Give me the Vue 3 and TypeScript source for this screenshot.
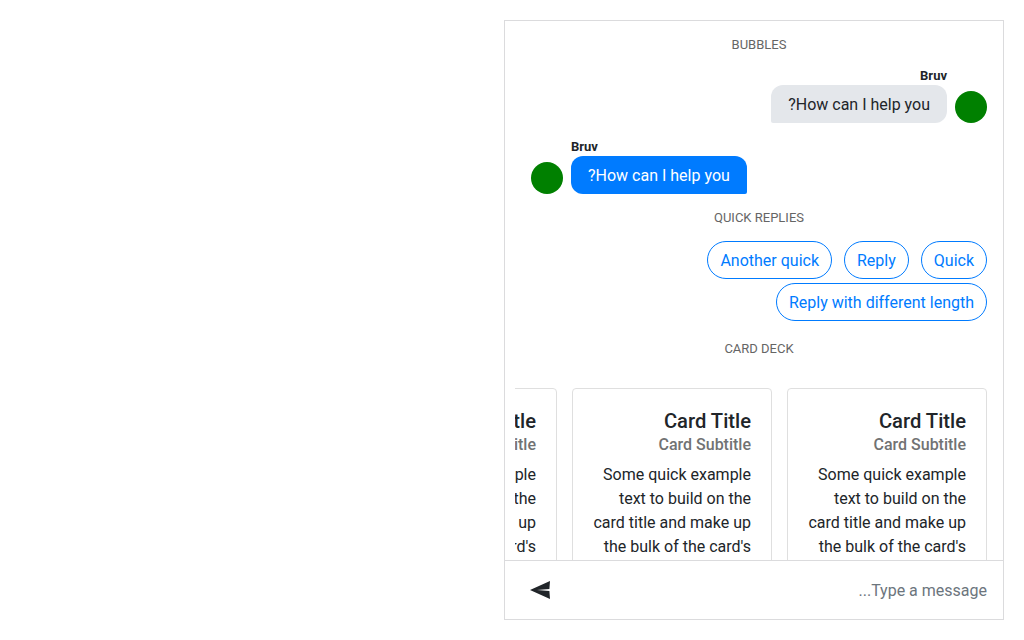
<script setup lang="ts">
interface Message {
  author: string
  text: string
  position: 'left' | 'right'
}

const messages: Message[] = [
  { author: 'Bruv', text: 'How can I help you?', position: 'left' },
  { author: 'Bruv', text: 'How can I help you?', position: 'right' },
]

const replies: string[] = ['Quick', 'Reply', 'Another quick', 'Reply with different length']

const cards = [1, 2, 3].map((id) => ({
  id,
  title: 'Card Title',
  subtitle: 'Card Subtitle',
  text: "Some quick example text to build on the card title and make up the bulk of the card's content.",
}))
</script>

<template>
  <main class="page" dir="rtl">
    <section class="chat">
      <div class="messages">
        <div class="divider">BUBBLES</div>
        <div v-for="(m, i) in messages" :key="i" class="message" :class="m.position">
          <div class="avatar"></div>
          <div class="body">
            <div class="author">{{ m.author }}</div>
            <div class="bubble">{{ m.text }}</div>
          </div>
        </div>
        <div class="divider replies-title">QUICK REPLIES</div>
        <div class="replies">
          <button v-for="r in replies" :key="r" class="reply" type="button">{{ r }}</button>
        </div>
        <div class="divider deck-title">CARD DECK</div>
        <div class="deck">
          <article v-for="c in cards" :key="c.id" class="card">
            <h5 class="title">{{ c.title }}</h5>
            <h6 class="subtitle">{{ c.subtitle }}</h6>
            <p class="text">{{ c.text }}</p>
          </article>
        </div>
      </div>
      <form class="composer" @submit.prevent>
        <input class="input" type="text" placeholder="Type a message..." />
        <button class="send" type="submit" aria-label="Send">
          <svg width="22" height="20" viewBox="0 0 22 20">
            <path d="M1 10 21 1 20.4 8.9 8 10 20.4 11.1 21 19Z" fill="#212529" />
          </svg>
        </button>
      </form>
    </section>
  </main>
</template>

<style>
body {
  margin: 0;
  background: #fff;
}
</style>

<style scoped>
.page,
.page * {
  box-sizing: border-box;
}
.page {
  height: 640px;
  padding: 20px;
  overflow: hidden;
  font-family: Roboto, 'Liberation Sans', sans-serif;
  font-size: 16px;
  line-height: 24px;
  color: #212529;
}
.chat {
  display: flex;
  flex-direction: column;
  width: 500px;
  height: 600px;
  border: 1px solid #dbdbdd;
}
.messages {
  flex: 1;
  min-height: 0;
  overflow: hidden;
  margin-left: 10px;
  padding: 14px 16px 0;
}
.divider {
  height: 20px;
  font-size: 13px;
  line-height: 20px;
  text-align: center;
  color: #656565;
}
.message {
  display: flex;
  align-items: flex-end;
  gap: 8px;
  height: 55px;
  margin-top: 13px;
}
.message.right {
  flex-direction: row-reverse;
  justify-content: flex-start;
  margin-top: 16px;
}
.avatar {
  width: 32px;
  height: 32px;
  border-radius: 50%;
  background: green;
}
.author {
  height: 17px;
  font-size: 13px;
  font-weight: 700;
  line-height: 15px;
}
.message.right .author {
  text-align: left;
}
.bubble {
  height: 38px;
  padding: 8px 17px 6px;
  border-radius: 12px 12px 12px 2px;
  background: #e4e7eb;
}
.message.right .bubble {
  border-radius: 12px 12px 2px 12px;
  background: #007bff;
  color: #fff;
}
.replies-title {
  margin-top: 14px;
}
.replies {
  display: flex;
  flex-wrap: wrap;
  gap: 4px 12px;
  margin-top: 13px;
}
.reply {
  height: 38px;
  padding: 2px 12px 0;
  border: 1px solid #007bff;
  border-radius: 19px;
  background: #fff;
  color: #007bff;
  font: inherit;
}
.deck-title {
  margin-top: 18px;
}
.deck {
  display: flex;
  gap: 15px;
  margin: 29px -16px 0;
  padding: 0 16px;
  overflow: hidden;
}
.card {
  flex: 0 0 200px;
  padding: 20px;
  border: 1px solid #dfdfdf;
  border-radius: 4px;
}
.title {
  margin: 0;
  font-size: 20.2px;
  font-weight: 500;
  line-height: 24px;
}
.subtitle {
  margin: 2px 0 9px;
  font-size: 16px;
  font-weight: 500;
  line-height: 19px;
  color: #717273;
}
.text {
  margin: 0;
}
.composer {
  display: flex;
  align-items: center;
  flex: 0 0 59px;
  padding: 0 16px 0 24px;
  border-top: 1px solid #dbdbdd;
}
.input {
  flex: 1;
  min-width: 0;
  height: 38px;
  padding: 0;
  border: 0;
  outline: 0;
  background: transparent;
  font: inherit;
}
.input::placeholder {
  color: #6c757d;
  opacity: 1;
}
.send {
  display: flex;
  padding: 0;
  border: 0;
  background: transparent;
}
</style>
